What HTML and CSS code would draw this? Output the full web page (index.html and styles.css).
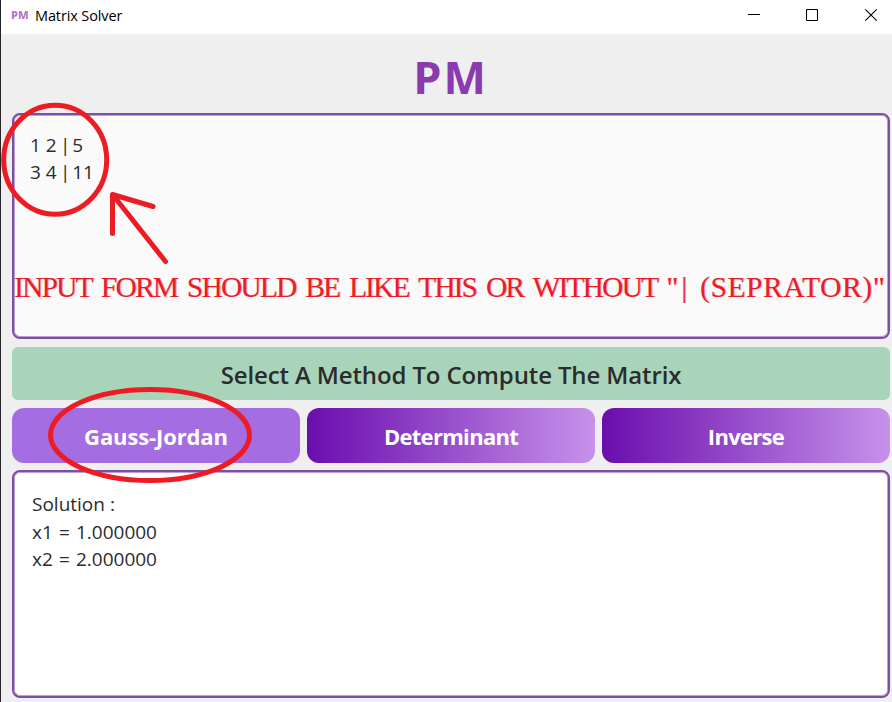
FILE: index.html
```html
<!DOCTYPE html>
<html lang="en">
<head>
<meta charset="utf-8">
<title>Matrix Solver</title>
<link rel="stylesheet" href="styles.css">
</head>
<body>
<div class="window">
  <header class="titlebar">
    <span class="app-icon">PM</span>
    <span class="app-name">Matrix Solver</span>
    <svg class="controls" width="132" height="14" viewBox="0 0 132 14" fill="none" stroke="#000">
      <path d="M0 6.500h12M58.500 1.500h11v11h-11z"/>
      <path d="M117.300 1.300l11.400 11.400M128.700 1.300l-11.400 11.400" stroke-width="1.100"/>
    </svg>
  </header>
  <main class="content">
    <h1 class="logo">PM</h1>
    <section class="panel input">
      <div class="line">1 2<span class="pipe"> | </span>5</div>
      <div class="line">3 4<span class="pipe"> | </span>11</div>
      <p class="caption">INPUT FORM SHOULD BE LIKE THIS OR WITHOUT <span class="bar">"|</span> <span class="wide">(SEPRATOR)"</span></p>
    </section>
    <div class="banner">Select A Method To Compute The Matrix</div>
    <div class="methods">
      <button class="method active">Gauss-Jordan</button>
      <button class="method determinant">Determinant</button>
      <button class="method inverse">Inverse</button>
    </div>
    <section class="panel output">
      <div class="line solution">Solution :</div>
      <div class="line">x1 = 1.000000</div>
      <div class="line">x2 = 2.000000</div>
    </section>
  </main>
  <svg class="marks" width="892" height="702" viewBox="0 0 892 702" fill="none" stroke="#ed1c24" stroke-width="5" stroke-linecap="round" stroke-linejoin="round">
    <ellipse cx="55.200" cy="159.700" rx="51.500" ry="54.500"/>
    <path d="M165.500 261.500L112.500 194.500L153 206.500M112.500 194.500V233.500"/>
    <ellipse cx="150" cy="435" rx="99.500" ry="45.500"/>
  </svg>
</div>
</body>
</html>
```
FILE: styles.css
```css
* { box-sizing: border-box; }
body { margin: 0; }
.window {
  position: relative;
  width: 892px;
  height: 702px;
  overflow: hidden;
  background: #efefef;
  border-left: 1px solid #252327;
  font-family: "Open Sans", "Noto Sans", sans-serif;
  color: #2c2c2c;
}
.titlebar {
  display: flex;
  align-items: center;
  height: 34px;
  padding: 0 12px 4px 10px;
  background: #fff;
}
.app-icon {
  width: 18px;
  font-size: 11px;
  font-weight: 800;
  line-height: 10px;
  color: #b47acb;
  filter: blur(0.5px);
}
.app-name {
  margin: 2px 0 0 6px;
  font-size: 14.500px;
  line-height: 20px;
  letter-spacing: -0.12px;
  color: #000;
}
.controls { margin-left: auto; }
.content {
  display: flex;
  flex-direction: column;
  padding: 0 2px 0 11px;
}
.logo {
  height: 79px;
  margin: 0;
  padding-right: 1px;
  font-size: 45px;
  line-height: 86px;
  letter-spacing: 2px;
  text-align: center;
  color: #8b3aaf;
}
.panel {
  border: 2px solid #7d4fa3;
  border-radius: 8px;
  box-shadow: inset 0 0 0 1px #b9a0cd;
  white-space: nowrap;
}
.input {
  height: 226px;
  padding: 17px 0 0 16px;
  background: #fafafa;
}
.line {
  height: 27px;
  font-size: 19px;
  line-height: 27px;
}
.pipe { letter-spacing: -1.600px; }
.caption {
  margin: 83px 0 0 -16px;
  font-family: "Liberation Serif", serif;
  font-size: 29.500px;
  line-height: 36px;
  letter-spacing: -1.840px;
  word-spacing: 4.200px;
  color: #ed1c24;
  text-shadow: 1px 0 #f6a5bd;
}
.bar { letter-spacing: 3px; }
.wide { letter-spacing: 0.600px; }
.banner {
  height: 53px;
  margin-top: 8px;
  border-radius: 6px;
  background: #a8d5ba;
  font-size: 24px;
  font-weight: 600;
  line-height: 56px;
  letter-spacing: -0.130px;
  text-align: center;
}
.methods {
  display: grid;
  grid-template-columns: repeat(3, 288px);
  gap: 7px;
  margin-top: 8px;
}
.method {
  height: 55px;
  padding: 1px 0 0;
  border: 0;
  border-radius: 12px;
  background: linear-gradient(to right, #6a0dad, #c792ea);
  font: 700 22px/52px "Open Sans", "Noto Sans", sans-serif;
  letter-spacing: -0.120px;
  color: #fff;
}
.method.active { background: #a56de2; }
.method.determinant { letter-spacing: -0.700px; }
.method.inverse { letter-spacing: -0.700px; }
.output {
  height: 228px;
  margin-top: 7px;
  padding: 19px 0 0 18px;
  background: #fff;
}
.output .line {
  height: 27.500px;
  line-height: 27.500px;
  word-spacing: 1.200px;
}
.output .solution { word-spacing: 0; }
.marks {
  position: absolute;
  top: 0;
  left: -1px;
}
```
